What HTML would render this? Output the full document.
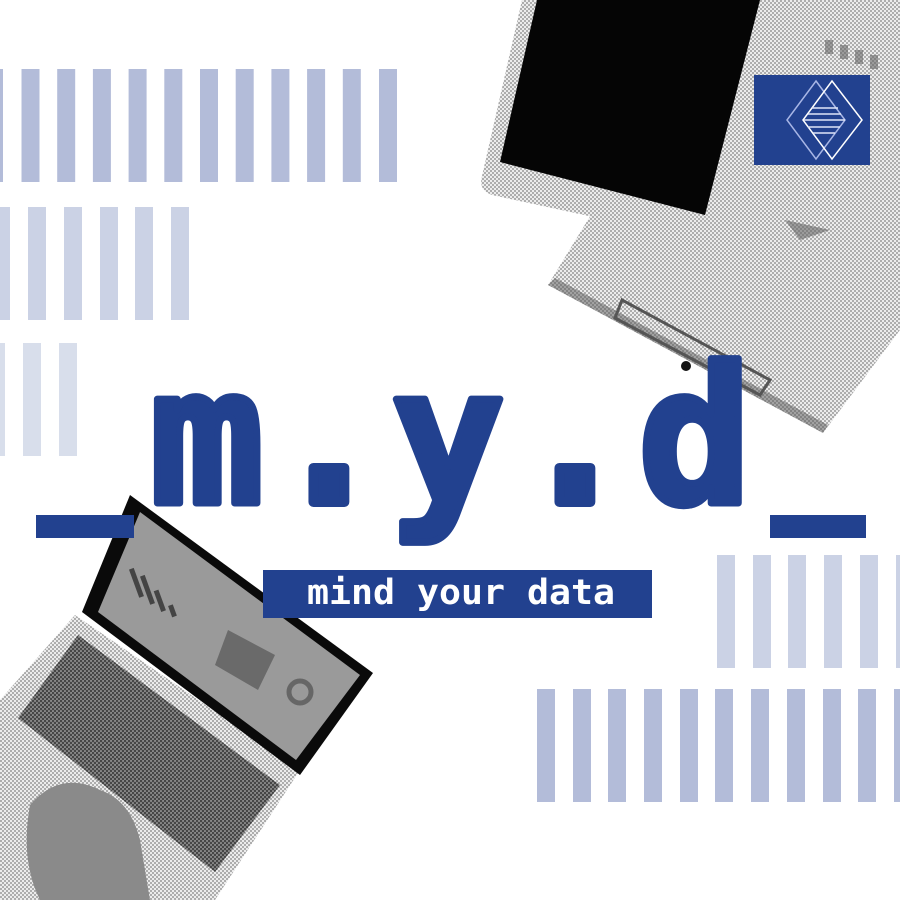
<!DOCTYPE html>
<html><head><meta charset="utf-8"><style>
html,body{margin:0;padding:0;background:#fff}
#c{position:relative;width:900px;height:900px;overflow:hidden;background:#fff}
</style></head><body><div id="c">
<svg width="900" height="900" viewBox="0 0 900 900" xmlns="http://www.w3.org/2000/svg" style="position:absolute;left:0;top:0">
<defs>
<pattern id="ht" width="4" height="4" patternUnits="userSpaceOnUse"><rect width="4" height="4" fill="#ececec"/><circle cx="1" cy="1" r="1" fill="#999"/><circle cx="3" cy="3" r="1" fill="#999"/></pattern>
<pattern id="htd" width="4" height="4" patternUnits="userSpaceOnUse"><rect width="4" height="4" fill="#888"/><circle cx="1" cy="1" r="1.2" fill="#444"/><circle cx="3" cy="3" r="1.2" fill="#444"/></pattern>
</defs>
<g fill="#b3bcd9">
<rect x="0" y="69" width="3" height="113"/>
<rect x="21.5" y="69" width="18" height="113"/><rect x="57.2" y="69" width="18" height="113"/><rect x="92.9" y="69" width="18" height="113"/><rect x="128.6" y="69" width="18" height="113"/><rect x="164.3" y="69" width="18" height="113"/><rect x="200" y="69" width="18" height="113"/><rect x="235.7" y="69" width="18" height="113"/><rect x="271.4" y="69" width="18" height="113"/><rect x="307.1" y="69" width="18" height="113"/><rect x="342.8" y="69" width="18" height="113"/><rect x="379" y="69" width="18" height="113"/>
</g>
<g fill="#cbd2e5">
<rect x="0" y="207" width="10" height="113"/>
<rect x="28" y="207" width="18" height="113"/><rect x="64" y="207" width="18" height="113"/><rect x="100" y="207" width="18" height="113"/><rect x="135" y="207" width="18" height="113"/><rect x="171" y="207" width="18" height="113"/>
</g>
<g fill="#d8deeb">
<rect x="0" y="343" width="5" height="113"/><rect x="23" y="343" width="18" height="113"/><rect x="59" y="343" width="18" height="113"/>
</g>
<g fill="#cbd2e5">
<rect x="717" y="555" width="18" height="113"/><rect x="753" y="555" width="18" height="113"/><rect x="788" y="555" width="18" height="113"/><rect x="824" y="555" width="18" height="113"/><rect x="860" y="555" width="18" height="113"/><rect x="896" y="555" width="4" height="113"/>
</g>
<g fill="#b3bcd9">
<rect x="537" y="689" width="18" height="113"/><rect x="573" y="689" width="18" height="113"/><rect x="608" y="689" width="18" height="113"/><rect x="644" y="689" width="18" height="113"/><rect x="680" y="689" width="18" height="113"/><rect x="715" y="689" width="18" height="113"/><rect x="751" y="689" width="18" height="113"/><rect x="787" y="689" width="18" height="113"/><rect x="823" y="689" width="18" height="113"/><rect x="858" y="689" width="18" height="113"/><rect x="894" y="689" width="6" height="113"/>
</g>
<!-- clipboard -->
<polygon points="548,285 600,200 780,0 900,0 900,330 823,433" fill="url(#ht)"/>
<polygon points="548,285 823,433 828,425 555,278" fill="#555" opacity="0.5"/>
<polygon points="622,300 770,380 760,395 615,318" fill="none" stroke="#555" stroke-width="3"/>
<circle cx="686" cy="366" r="5" fill="#111"/>
<polygon points="785,220 830,230 800,240" fill="#666" opacity="0.6"/>
<g fill="#666" opacity="0.6"><rect x="825" y="40" width="8" height="14"/><rect x="840" y="45" width="8" height="14"/><rect x="855" y="50" width="8" height="14"/><rect x="870" y="55" width="8" height="14"/></g>
<!-- tablet -->
<path d="M522,0 L780,0 L740,235 Q736,248 722,245 L492,195 Q478,190 482,176 Z" fill="url(#ht)"/>
<polygon points="537,0 760,0 705,215 500,162" fill="#050505"/>
<!-- logo -->
<rect x="754" y="75" width="116" height="90" fill="#22418f"/>
<polygon points="816,81 845,120 816,159 787,120" fill="none" stroke="#a8b6e6" stroke-width="1.5"/>
<polygon points="832,81 862,120 832,159 803,120" fill="none" stroke="#fff" stroke-width="1.5"/>
<g stroke="#dfe5f8" stroke-width="1.5">
<line x1="812" y1="108" x2="838" y2="108"/><line x1="808" y1="114" x2="841" y2="114"/><line x1="804" y1="120" x2="845" y2="120"/><line x1="808" y1="127" x2="840" y2="127"/><line x1="813" y1="133" x2="835" y2="133"/>
</g>
<!-- laptop -->
<polygon points="75,615 300,770 215,900 0,900 0,700" fill="url(#ht)"/>
<polygon points="78,635 280,785 215,872 18,718" fill="url(#htd)"/>
<polygon points="130,495 373,673 300,775 82,612" fill="#0a0a0a"/>
<polygon points="140,512 360,675 296,760 98,612" fill="#9a9a9a"/>
<g fill="#444"><rect x="134" y="568" width="5" height="30" transform="rotate(-20 136 583)"/><rect x="145" y="575" width="5" height="30" transform="rotate(-20 147 590)"/><rect x="157" y="590" width="5" height="22" transform="rotate(-20 159 600)"/><rect x="170" y="605" width="5" height="12" transform="rotate(-20 172 611)"/></g>
<polygon points="228,630 275,655 258,690 215,665" fill="#6a6a6a"/>
<circle cx="300" cy="692" r="11" fill="none" stroke="#666" stroke-width="5"/>
<path d="M30,805 Q60,770 100,790 Q130,800 140,840 L150,900 L40,900 Q20,860 30,805Z" fill="#8a8a8a"/>
<!-- title -->
<rect x="36" y="515" width="98" height="23" fill="#22418f"/>
<rect x="770" y="515" width="96" height="23" fill="#22418f"/>
<g font-family="DejaVu Sans Mono, Liberation Mono, monospace" font-weight="bold" font-size="190" fill="#22418f" stroke="#22418f" stroke-width="7" stroke-linejoin="round" text-anchor="middle">
<text x="207" y="503">m</text><text x="448" y="503">y</text><text x="695" y="503">d</text>
</g>
<g font-family="DejaVu Sans Mono, Liberation Mono, monospace" font-weight="bold" font-size="190" fill="#22418f" stroke="#22418f" stroke-width="10" stroke-linejoin="round" text-anchor="middle">
<text x="329" y="502">.</text><text x="575" y="502">.</text>
</g>
<rect x="263" y="570" width="389" height="48" fill="#22418f"/>
<text x="307" y="604" font-family="DejaVu Sans Mono, Liberation Mono, monospace" font-weight="bold" font-size="35" fill="#fff" textLength="308" lengthAdjust="spacingAndGlyphs">mind your data</text>
</svg>
</div></body></html>
